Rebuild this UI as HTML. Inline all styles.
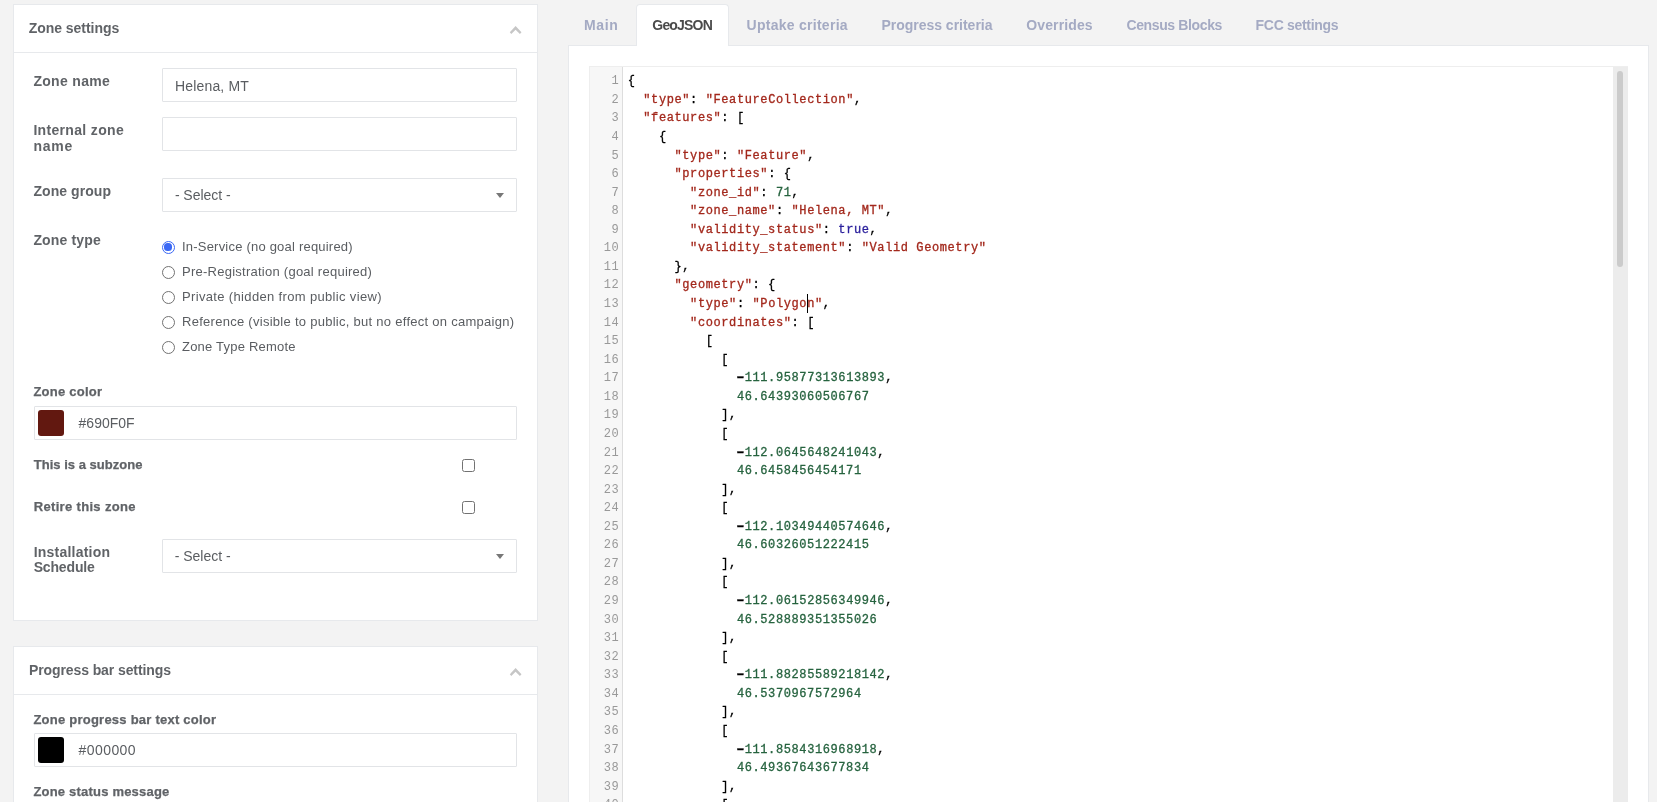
<!DOCTYPE html>
<html lang="en">
<head>
<meta charset="utf-8">
<title>Zone settings</title>
<style>
*{box-sizing:border-box}
html,body{margin:0;padding:0}
body{width:1657px;height:802px;overflow:hidden;background:#f3f3f3;position:relative;font-family:"Liberation Sans",sans-serif;font-size:14px;color:#5a5d61}
.panel{position:absolute;background:#fff;border:1px solid #e7e9ec}
.hd{position:absolute;left:0;right:0;top:0;height:48px;border-bottom:1px solid #e7e9ec}
.x{position:absolute;white-space:pre;line-height:1;margin:0;padding:0;display:block}
.inp{position:absolute;background:#fff;border:1px solid #e2e4e7;border-radius:1px}
.caret{position:absolute;width:0;height:0;border-left:4px solid transparent;border-right:4px solid transparent;border-top:5px solid #777}
.radio{position:absolute;width:13px;height:13px;border-radius:50%;border:1.2px solid #727272;background:#fff}
.radio.on{border:1.5px solid #3a68f5}
.radio.on:after{content:"";position:absolute;left:1.4px;top:1.4px;width:7.2px;height:7.2px;border-radius:50%;background:#3a68f5}
.chk{position:absolute;width:13px;height:13px;border:1.2px solid #727272;border-radius:2.5px;background:#fff}
.sw{position:absolute;width:26px;height:26px;border-radius:3px}
.chev{position:absolute}
.tabon{position:absolute;left:636px;top:4px;width:93px;height:42px;background:#fff;border:1px solid #e7e9ec;border-bottom:0;border-radius:4px 4px 0 0}
.ed{position:absolute;left:589px;top:66px;width:1039px;height:760px;background:#fff;border:1px solid #eee;overflow:hidden}
.gut{position:absolute;left:0;top:0;bottom:0;width:33px;background:#f7f7f7;border-right:1px solid #ddd}
.lines{position:absolute;left:0;top:5.3px;right:0}
.ln{position:relative;height:18.571px;line-height:18.571px}
.ln pre{margin:0;position:absolute;left:37.7px;top:0;font-family:"Liberation Mono",monospace;font-size:12px;letter-spacing:.6px;line-height:18.571px;color:#000}
.no{position:absolute;left:0;width:29.4px;top:0;font-family:"Liberation Mono",monospace;font-size:12px;letter-spacing:.6px;color:#999;line-height:18.571px;text-align:right}
.s{color:#a3281c}.n{color:#26633f}.a{color:#2a1f9c}.m{display:inline-block;transform:scaleX(1.7);font-weight:700}
.ln pre{-webkit-text-stroke:.3px currentColor}
.cur{position:absolute;width:1px;height:18.6px;background:#000}
.sbt{position:absolute;left:1613px;top:67px;width:15px;height:740px;background:#ececec}
.sbh{position:absolute;left:1617px;top:71px;width:6px;height:196px;border-radius:3px;background:#cbcbcb}
</style>
</head>
<body>
<div id="root" style="position:absolute;left:0;top:0;width:1657px;height:802px;will-change:transform">
<div class="panel" style="left:13px;top:4px;width:525px;height:617px"><div class="hd"></div></div>
<div class="panel" style="left:13px;top:646px;width:525px;height:300px"><div class="hd"></div></div>
<svg class="chev" style="left:0;top:0px" width="1657" height="60" viewBox="0 0 1657 60"><polygon points="515.6,26.1 521.5,32.2 519.9,33.9 515.6,29.8 511.3,33.9 509.8,32.2" fill="#c6c6c6"/></svg>
<svg class="chev" style="left:0;top:642px" width="1657" height="60" viewBox="0 0 1657 60"><polygon points="515.6,26.1 521.5,32.2 519.9,33.9 515.6,29.8 511.3,33.9 509.8,32.2" fill="#c6c6c6"/></svg>

<div class="inp" style="left:162px;top:68px;width:355px;height:34px"></div>
<div class="inp" style="left:162px;top:117px;width:355px;height:34px"></div>
<div class="inp" style="left:162px;top:178px;width:355px;height:34px"></div><div class="caret" style="left:496px;top:193px"></div>
<div class="radio on" style="left:162px;top:241px"></div>
<div class="radio" style="left:162px;top:266px"></div>
<div class="radio" style="left:162px;top:291px"></div>
<div class="radio" style="left:162px;top:316px"></div>
<div class="radio" style="left:162px;top:341px"></div>
<div class="inp" style="left:34px;top:406px;width:483px;height:34px"></div><div class="sw" style="left:38px;top:410px;background:#621810"></div>
<div class="chk" style="left:462px;top:459px"></div>
<div class="chk" style="left:462px;top:501px"></div>
<div class="inp" style="left:162px;top:539px;width:355px;height:34px"></div><div class="caret" style="left:496px;top:554px"></div>
<div class="inp" style="left:34px;top:733px;width:483px;height:34px"></div><div class="sw" style="left:38px;top:737px;background:#000"></div>

<div class="panel" style="left:568px;top:45px;width:1081px;height:800px"></div>
<div class="tabon"></div>
<div class="ed">
 <div class="gut"></div>
 <div class="lines">
<div class="ln"><span class="no">1</span><pre>{</pre></div>
<div class="ln"><span class="no">2</span><pre>  <span class="s">&quot;type&quot;</span>: <span class="s">&quot;FeatureCollection&quot;</span>,</pre></div>
<div class="ln"><span class="no">3</span><pre>  <span class="s">&quot;features&quot;</span>: [</pre></div>
<div class="ln"><span class="no">4</span><pre>    {</pre></div>
<div class="ln"><span class="no">5</span><pre>      <span class="s">&quot;type&quot;</span>: <span class="s">&quot;Feature&quot;</span>,</pre></div>
<div class="ln"><span class="no">6</span><pre>      <span class="s">&quot;properties&quot;</span>: {</pre></div>
<div class="ln"><span class="no">7</span><pre>        <span class="s">&quot;zone_id&quot;</span>: <span class="n">71</span>,</pre></div>
<div class="ln"><span class="no">8</span><pre>        <span class="s">&quot;zone_name&quot;</span>: <span class="s">&quot;Helena, MT&quot;</span>,</pre></div>
<div class="ln"><span class="no">9</span><pre>        <span class="s">&quot;validity_status&quot;</span>: <span class="a">true</span>,</pre></div>
<div class="ln"><span class="no">10</span><pre>        <span class="s">&quot;validity_statement&quot;</span>: <span class="s">&quot;Valid Geometry&quot;</span></pre></div>
<div class="ln"><span class="no">11</span><pre>      },</pre></div>
<div class="ln"><span class="no">12</span><pre>      <span class="s">&quot;geometry&quot;</span>: {</pre></div>
<div class="ln"><span class="no">13</span><pre>        <span class="s">&quot;type&quot;</span>: <span class="s">&quot;Polygon&quot;</span>,</pre></div>
<div class="ln"><span class="no">14</span><pre>        <span class="s">&quot;coordinates&quot;</span>: [</pre></div>
<div class="ln"><span class="no">15</span><pre>          [</pre></div>
<div class="ln"><span class="no">16</span><pre>            [</pre></div>
<div class="ln"><span class="no">17</span><pre>              <span class="m">-</span><span class="n">111.95877313613893</span>,</pre></div>
<div class="ln"><span class="no">18</span><pre>              <span class="n">46.64393060506767</span></pre></div>
<div class="ln"><span class="no">19</span><pre>            ],</pre></div>
<div class="ln"><span class="no">20</span><pre>            [</pre></div>
<div class="ln"><span class="no">21</span><pre>              <span class="m">-</span><span class="n">112.0645648241043</span>,</pre></div>
<div class="ln"><span class="no">22</span><pre>              <span class="n">46.6458456454171</span></pre></div>
<div class="ln"><span class="no">23</span><pre>            ],</pre></div>
<div class="ln"><span class="no">24</span><pre>            [</pre></div>
<div class="ln"><span class="no">25</span><pre>              <span class="m">-</span><span class="n">112.10349440574646</span>,</pre></div>
<div class="ln"><span class="no">26</span><pre>              <span class="n">46.60326051222415</span></pre></div>
<div class="ln"><span class="no">27</span><pre>            ],</pre></div>
<div class="ln"><span class="no">28</span><pre>            [</pre></div>
<div class="ln"><span class="no">29</span><pre>              <span class="m">-</span><span class="n">112.06152856349946</span>,</pre></div>
<div class="ln"><span class="no">30</span><pre>              <span class="n">46.528889351355026</span></pre></div>
<div class="ln"><span class="no">31</span><pre>            ],</pre></div>
<div class="ln"><span class="no">32</span><pre>            [</pre></div>
<div class="ln"><span class="no">33</span><pre>              <span class="m">-</span><span class="n">111.88285589218142</span>,</pre></div>
<div class="ln"><span class="no">34</span><pre>              <span class="n">46.5370967572964</span></pre></div>
<div class="ln"><span class="no">35</span><pre>            ],</pre></div>
<div class="ln"><span class="no">36</span><pre>            [</pre></div>
<div class="ln"><span class="no">37</span><pre>              <span class="m">-</span><span class="n">111.8584316968918</span>,</pre></div>
<div class="ln"><span class="no">38</span><pre>              <span class="n">46.49367643677834</span></pre></div>
<div class="ln"><span class="no">39</span><pre>            ],</pre></div>
<div class="ln"><span class="no">40</span><pre>            [</pre></div>

 </div>
</div>
<div class="cur" style="left:806.5px;top:294px"></div>
<div class="sbt"></div><div class="sbh"></div>
<h2 class="x h" style="left:28.7px;top:21.15px;font-size:14px;letter-spacing:-0.035px;color:#606367;font-weight:700">Zone settings</h2>
<label class="x l" style="left:33.4px;top:74.15px;font-size:14px;letter-spacing:0.312px;color:#606367;font-weight:700">Zone name</label>
<label class="x l" style="left:33.4px;top:123.15px;font-size:14px;letter-spacing:0.328px;color:#606367;font-weight:700">Internal zone</label>
<label class="x l" style="left:33.4px;top:139.15px;font-size:14px;letter-spacing:0.774px;color:#606367;font-weight:700">name</label>
<label class="x l" style="left:33.4px;top:184.15px;font-size:14px;letter-spacing:0.067px;color:#606367;font-weight:700">Zone group</label>
<label class="x l" style="left:33.4px;top:233.15px;font-size:14px;letter-spacing:0.159px;color:#606367;font-weight:700">Zone type</label>
<span class="x v" style="left:175.1px;top:79.15px;font-size:14px;letter-spacing:0.149px;color:#5a5d61;font-weight:400">Helena, MT</span>
<span class="x v" style="left:174.9px;top:188.15px;font-size:14px;letter-spacing:-0.035px;color:#5a5d61;font-weight:400">- Select -</span>
<label class="x r" style="left:182.0px;top:240.00px;font-size:13px;letter-spacing:0.209px;color:#5a5d61;font-weight:400">In-Service (no goal required)</label>
<label class="x r" style="left:182.0px;top:265.00px;font-size:13px;letter-spacing:0.252px;color:#5a5d61;font-weight:400">Pre-Registration (goal required)</label>
<label class="x r" style="left:182.0px;top:290.00px;font-size:13px;letter-spacing:0.344px;color:#5a5d61;font-weight:400">Private (hidden from public view)</label>
<label class="x r" style="left:182.0px;top:315.00px;font-size:13px;letter-spacing:0.275px;color:#5a5d61;font-weight:400">Reference (visible to public, but no effect on campaign)</label>
<label class="x r" style="left:182.0px;top:340.00px;font-size:13px;letter-spacing:0.218px;color:#5a5d61;font-weight:400">Zone Type Remote</label>
<label class="x l" style="left:33.4px;top:385.00px;font-size:13px;letter-spacing:0.239px;color:#606367;font-weight:700;-webkit-text-stroke:.25px currentColor">Zone color</label>
<span class="x v" style="left:78.6px;top:416.15px;font-size:14px;letter-spacing:-0.008px;color:#5a5d61;font-weight:400">#690F0F</span>
<label class="x l" style="left:33.7px;top:458.00px;font-size:13px;letter-spacing:0.028px;color:#606367;font-weight:700;-webkit-text-stroke:.25px currentColor">This is a subzone</label>
<label class="x l" style="left:33.7px;top:500.00px;font-size:13px;letter-spacing:0.334px;color:#606367;font-weight:700;-webkit-text-stroke:.25px currentColor">Retire this zone</label>
<label class="x l" style="left:33.7px;top:545.15px;font-size:14px;letter-spacing:0.218px;color:#606367;font-weight:700">Installation</label>
<label class="x l" style="left:33.7px;top:560.15px;font-size:14px;letter-spacing:-0.164px;color:#606367;font-weight:700">Schedule</label>
<span class="x v" style="left:174.7px;top:549.15px;font-size:14px;letter-spacing:-0.002px;color:#5a5d61;font-weight:400">- Select -</span>
<h2 class="x h" style="left:28.9px;top:663.15px;font-size:14px;letter-spacing:-0.092px;color:#606367;font-weight:700">Progress bar settings</h2>
<label class="x l" style="left:33.4px;top:713.00px;font-size:13px;letter-spacing:0.238px;color:#606367;font-weight:700;-webkit-text-stroke:.25px currentColor">Zone progress bar text color</label>
<span class="x v" style="left:78.6px;top:743.15px;font-size:14px;letter-spacing:0.414px;color:#5a5d61;font-weight:400">#000000</span>
<label class="x l" style="left:33.4px;top:785.00px;font-size:13px;letter-spacing:0.205px;color:#606367;font-weight:700;-webkit-text-stroke:.25px currentColor">Zone status message</label>
<a class="x t" style="left:584.0px;top:18.15px;font-size:14px;letter-spacing:0.636px;color:#a4aac3;font-weight:700">Main</a>
<a class="x t" style="left:652.3px;top:18.15px;font-size:14px;letter-spacing:-0.810px;color:#4a4a4a;font-weight:700">GeoJSON</a>
<a class="x t" style="left:746.5px;top:18.15px;font-size:14px;letter-spacing:0.273px;color:#a4aac3;font-weight:700">Uptake criteria</a>
<a class="x t" style="left:881.4px;top:18.15px;font-size:14px;letter-spacing:-0.012px;color:#a4aac3;font-weight:700">Progress criteria</a>
<a class="x t" style="left:1026.3px;top:18.15px;font-size:14px;letter-spacing:0.116px;color:#a4aac3;font-weight:700">Overrides</a>
<a class="x t" style="left:1126.4px;top:18.15px;font-size:14px;letter-spacing:-0.365px;color:#a4aac3;font-weight:700">Census Blocks</a>
<a class="x t" style="left:1255.6px;top:18.15px;font-size:14px;letter-spacing:-0.304px;color:#a4aac3;font-weight:700">FCC settings</a>
</div>
</body>
</html>
